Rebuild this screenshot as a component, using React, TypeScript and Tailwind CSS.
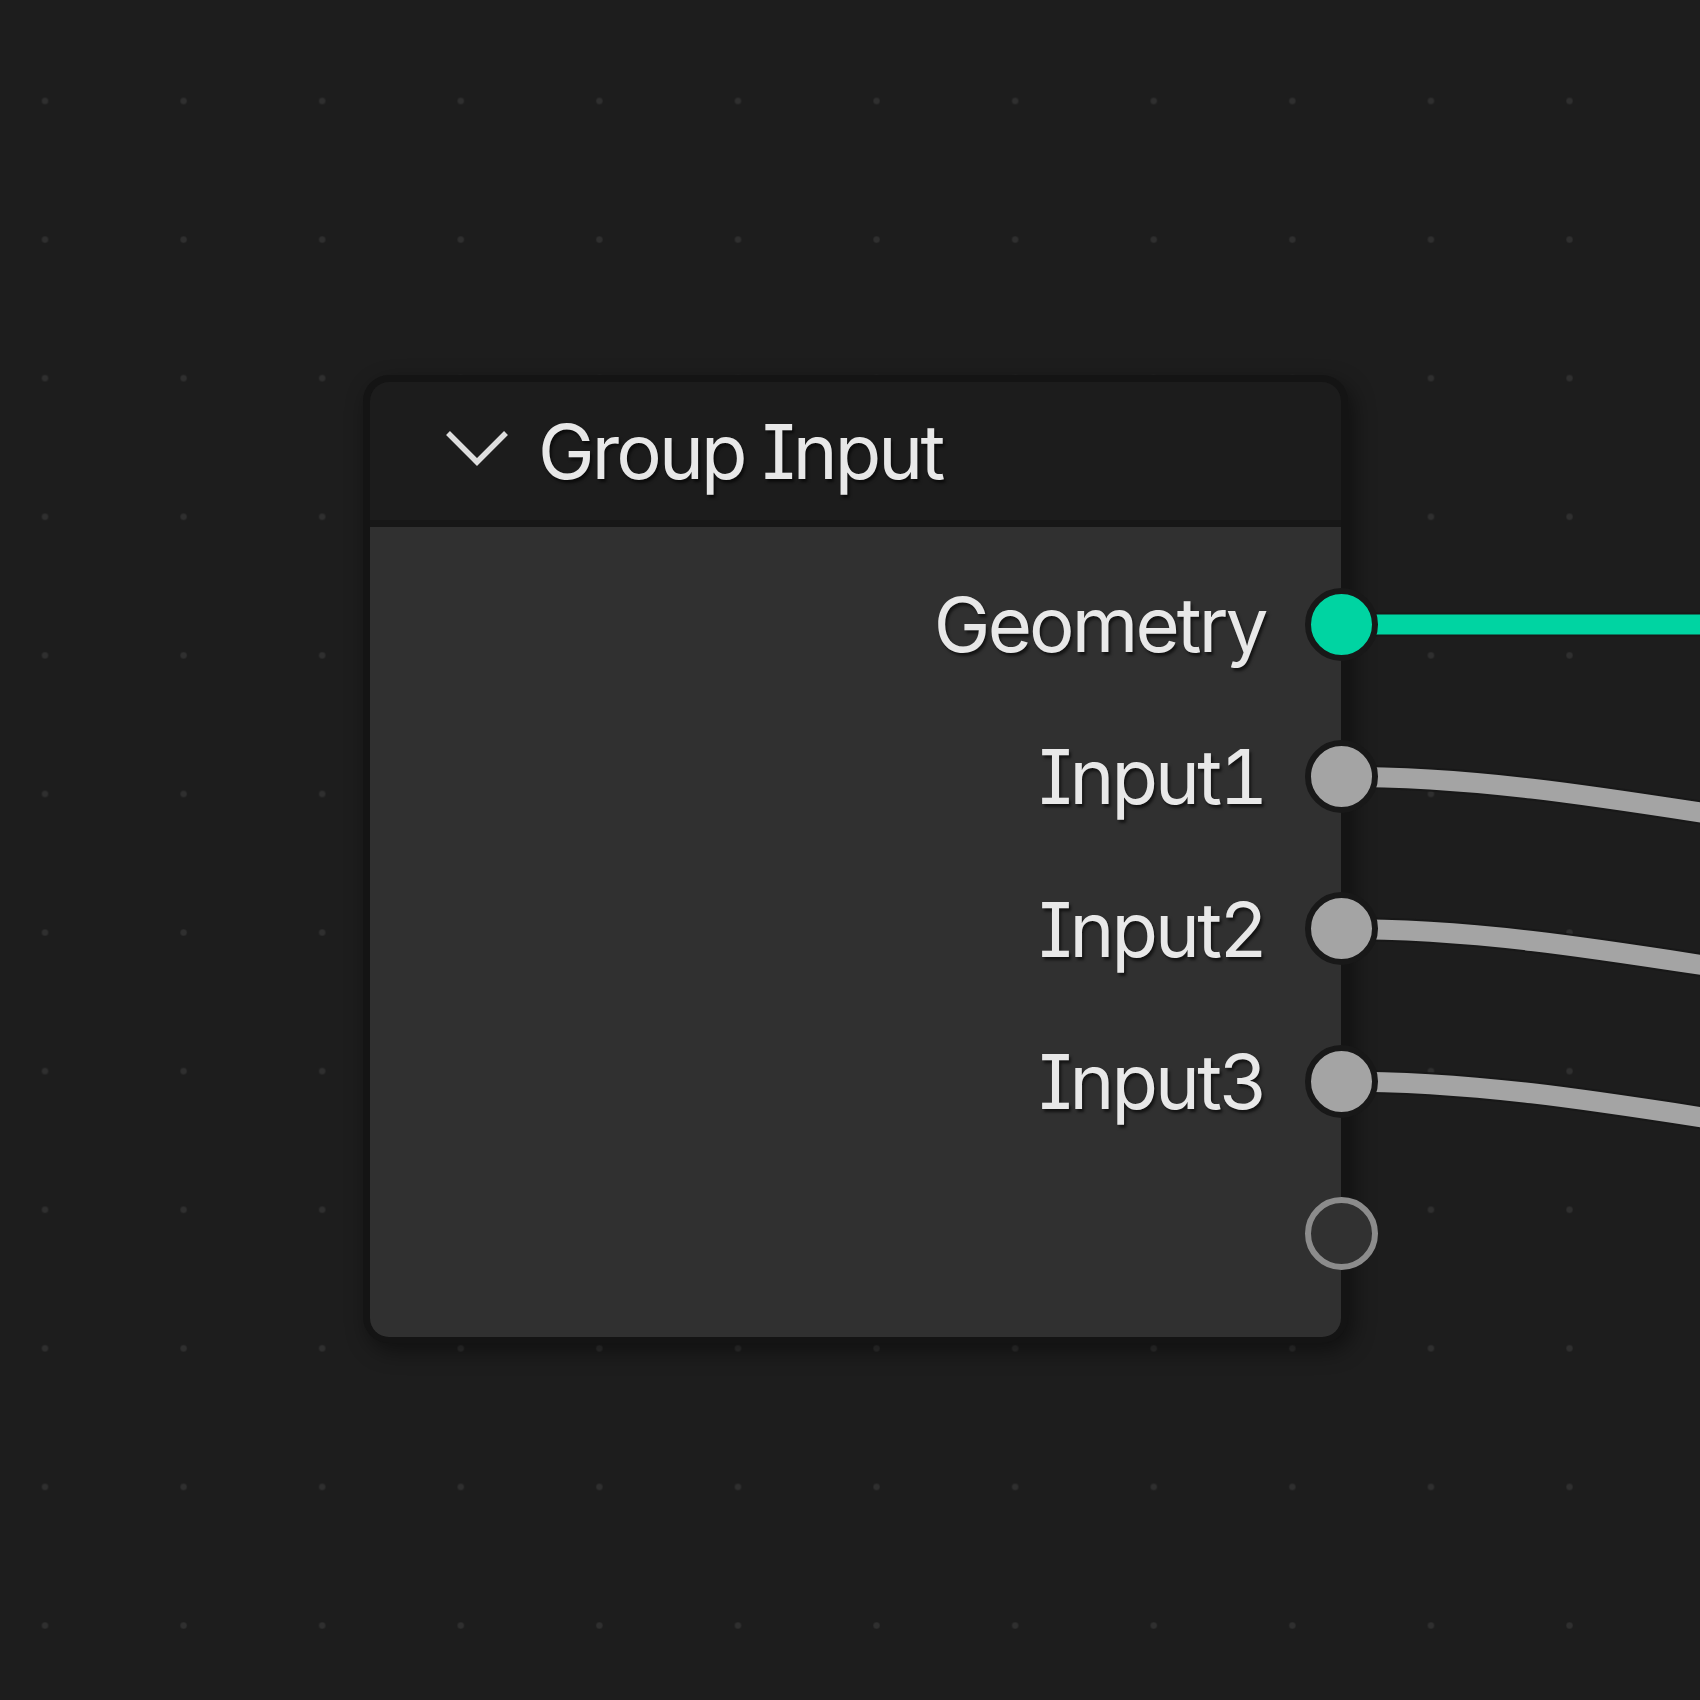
import React from "react";

type Socket = { label?: string; kind: "geometry" | "value" | "empty" };

const SOCKETS: Socket[] = [
  { label: "Geometry", kind: "geometry" },
  { label: "Input1", kind: "value" },
  { label: "Input2", kind: "value" },
  { label: "Input3", kind: "value" },
  { kind: "empty" },
];

// socket centres on the canvas (x is the node's right inner edge)
const SOCKET_X = 1340;
const ROW_Y = [624.5, 776.8, 929.1, 1081.4];

function noodle(y: number) {
  return `M${SOCKET_X} ${y} C1480 ${y}, 1600 ${y + 20}, 1760 ${y + 45}`;
}

function Links() {
  return (
    <svg className="absolute inset-0 h-[1700px] w-[1700px]" viewBox="0 0 1700 1700" fill="none">
      <path d={`M${SOCKET_X} ${ROW_Y[0]} H1720`} stroke="#181818" strokeWidth={24} />
      <path d={`M${SOCKET_X} ${ROW_Y[0]} H1720`} stroke="#00d4a2" strokeWidth={20} />
      {ROW_Y.slice(1).map((y) => (
        <g key={y}>
          <path d={noodle(y)} stroke="#181818" strokeWidth={24} />
          <path d={noodle(y)} stroke="#a4a4a4" strokeWidth={20} />
        </g>
      ))}
    </svg>
  );
}

function SocketDot({ kind }: { kind: Socket["kind"] }) {
  if (kind === "empty") {
    return <span className="-mr-[36.5px] size-[73px] shrink-0 rounded-full border-[6.5px] border-[#8c8c8c] bg-[#313131]" />;
  }
  return (
    <span
      className={
        kind === "geometry"
          ? "-mr-[36.5px] size-[73px] shrink-0 rounded-full border-[6.5px] border-[#181818] bg-[#00d4a2]"
          : "-mr-[36.5px] size-[73px] shrink-0 rounded-full border-[6.5px] border-[#181818] bg-[#a4a4a4]"
      }
    />
  );
}

function GroupInputNode() {
  return (
    <div className="absolute left-[363px] top-[375px] w-[985px] rounded-[26px] border-[7px] border-b-[6px] border-[#141414] bg-[#141414] shadow-[5px_8px_22px_rgba(0,0,0,0.45)]">
      {/* header */}
      <div className="flex h-[145px] items-center rounded-t-[19px] border-b-[7px] border-[#171717] bg-[#1c1c1c] pl-[75px]">
        <svg width="64" height="38" viewBox="0 0 64 38" fill="none" className="mt-[-6px] shrink-0">
          <path d="M3 4 L32 33 L61 4" stroke="#dedede" strokeWidth={5.5} />
        </svg>
        <span className="ml-[29px] text-[76px] leading-none tracking-[-2.9px] text-[#e8e8e8] [text-shadow:2px_3px_3px_rgba(0,0,0,0.6)]">
          Group Input
        </span>
      </div>

      {/* sockets */}
      <div className="flex flex-col rounded-b-[19px] bg-[#303030] pb-[28px] pt-[21px]">
        {SOCKETS.map((s, i) => (
          <div key={i} className="flex h-[152.3px] items-center justify-end">
            {s.label ? (
              <span className="mr-[39px] text-[76px] leading-none tracking-[-2.9px] text-[#e8e8e8] [text-shadow:2px_3px_3px_rgba(0,0,0,0.6)]">
                {s.label}
              </span>
            ) : null}
            <SocketDot kind={s.kind} />
          </div>
        ))}
      </div>
    </div>
  );
}

export default function App() {
  return (
    <div
      className="relative h-[1700px] w-[1700px] overflow-hidden bg-[#1d1d1d] font-['Inter','Noto_Sans',sans-serif] [background-image:radial-gradient(circle,#2f2f2f_0,#2f2f2f_2.5px,transparent_4px)] [background-position:-24.3px_31.7px] [background-size:138.6px_138.6px] [font-feature-settings:'cv08','tnum']"
    >
      <Links />
      <GroupInputNode />
    </div>
  );
}
